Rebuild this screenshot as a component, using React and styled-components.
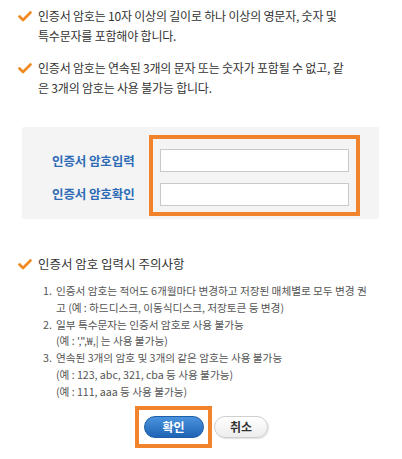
import React from "react";
import styled, { createGlobalStyle } from "styled-components";

const GlobalStyle = createGlobalStyle`
  html, body {
    margin: 0;
    padding: 0;
    background: #fff;
  }
  body {
    font-family: "Noto Sans CJK KR", "Noto Sans", sans-serif;
    color: #333;
  }
`;

const Page = styled.div`
  width: 402px;
  height: 459px;
  box-sizing: border-box;
  padding-top: 6px;
  overflow: hidden;
`;

const Notice = styled.div`
  display: flex;
  align-items: flex-start;
  padding-left: 18px;
  margin-top: ${(p) => p.$top || 0}px;
  font-size: 12px;
  line-height: 20px;
  color: #333;
  letter-spacing: -0.2px;
`;

const CheckWrap = styled.span`
  flex: none;
  width: 20px;
  height: 20px;
  display: flex;
  align-items: center;
`;

const Panel = styled.div`
  margin: 29px 23px 0 22px;
  height: 92px;
  background: #f4f4f5;
  border-radius: 2px;
  display: flex;
  align-items: flex-start;
  padding: 8px 0 0 30px;
  box-sizing: border-box;
`;

const Labels = styled.div`
  width: 86px;
  margin-right: 11px;
  padding-top: 14px;
  display: flex;
  flex-direction: column;
  gap: 10px;
`;

const Label = styled.label`
  height: 23px;
  line-height: 23px;
  font-size: 12.5px;
  font-weight: 700;
  color: #2d6cb5;
  letter-spacing: -0.1px;
  white-space: nowrap;
`;

const Highlight = styled.div`
  border: 4.5px solid #f0832b;
  padding: ${(p) => p.$pad};
  display: flex;
  flex-direction: column;
  gap: ${(p) => p.$gap || 0}px;
`;

const Input = styled.input`
  width: 189px;
  height: 23px;
  box-sizing: border-box;
  border: 1px solid #c9c9c9;
  background: #fff;
  margin: 0;
  outline: none;
`;

const Caution = styled(Notice)`
  margin-top: 35px;
  font-size: 12.5px;
  letter-spacing: 0;
`;

const List = styled.ol`
  margin: 9px 0 0 0;
  padding: 0;
  list-style: none;
  font-size: 10.7px;
  line-height: 16.8px;
  color: #555;
  letter-spacing: -0.05px;
`;

const Item = styled.li`
  display: flex;
  padding-left: 43px;
`;

const Num = styled.span`
  flex: none;
  width: 13px;
`;

const Buttons = styled.div`
  display: flex;
  align-items: center;
  gap: 2px;
  padding-left: 135px;
  margin-top: 5px;
`;

const Pill = styled.button`
  height: 22px;
  border-radius: 11px;
  font-family: inherit;
  font-size: 12px;
  font-weight: 700;
  padding: 0;
  cursor: pointer;
  width: ${(p) => p.$w}px;
  color: ${(p) => (p.$primary ? "#fff" : "#333")};
  border: 1px solid ${(p) => (p.$primary ? "#1d5ea8" : "#cfcfcf")};
  background: ${(p) =>
    p.$primary
      ? "linear-gradient(#4a93de, #1f63b4)"
      : "linear-gradient(#ffffff, #ececec)"};
  box-shadow: ${(p) => (p.$primary ? "none" : "1px 1px 1px rgba(0,0,0,0.12)")};
`;

function Check() {
  return (
    <CheckWrap>
      <svg width="14" height="11" viewBox="0 0 14 11">
        <path
          d="M1.5 5.5 L5 9 L12.5 1.5"
          fill="none"
          stroke="#f0891f"
          strokeWidth="2.6"
          strokeLinecap="round"
          strokeLinejoin="round"
        />
      </svg>
    </CheckWrap>
  );
}

export default function App() {
  return (
    <Page>
      <GlobalStyle />
      <Notice>
        <Check />
        <span>
          인증서 암호는 10자 이상의 길이로 하나 이상의 영문자, 숫자 및
          <br />
          특수문자를 포함해야 합니다.
        </span>
      </Notice>
      <Notice $top={12}>
        <Check />
        <span>
          인증서 암호는 연속된 3개의 문자 또는 숫자가 포함될 수 없고, 같
          <br />
          은 3개의 암호는 사용 불가능 합니다.
        </span>
      </Notice>

      <Panel>
        <Labels>
          <Label htmlFor="pw">인증서 암호입력</Label>
          <Label htmlFor="pw2">인증서 암호확인</Label>
        </Labels>
        <Highlight $pad="9.5px 7.5px 6.5px 6.5px" $gap={11}>
          <Input id="pw" type="password" />
          <Input id="pw2" type="password" />
        </Highlight>
      </Panel>

      <Caution>
        <Check />
        <span>인증서 암호 입력시 주의사항</span>
      </Caution>
      <List>
        <Item>
          <Num>1.</Num>
          <span>
            인증서 암호는 적어도 6개월마다 변경하고 저장된 매체별로 모두 변경 권
            <br />고 (예 : 하드디스크, 이동식디스크, 저장토큰 등 변경)
          </span>
        </Item>
        <Item>
          <Num>2.</Num>
          <span>
            일부 특수문자는 인증서 암호로 사용 불가능
            <br />
            (예 : ',",₩,| 는 사용 불가능)
          </span>
        </Item>
        <Item>
          <Num>3.</Num>
          <span>
            연속된 3개의 암호 및 3개의 같은 암호는 사용 불가능
            <br />
            (예 : 123, abc, 321, cba 등 사용 불가능)
            <br />
            (예 : 111, aaa 등 사용 불가능)
          </span>
        </Item>
      </List>

      <Buttons>
        <Highlight $pad="6px 4.5px">
          <Pill $primary $w={60}>
            확인
          </Pill>
        </Highlight>
        <Pill $w={54}>취소</Pill>
      </Buttons>
    </Page>
  );
}
